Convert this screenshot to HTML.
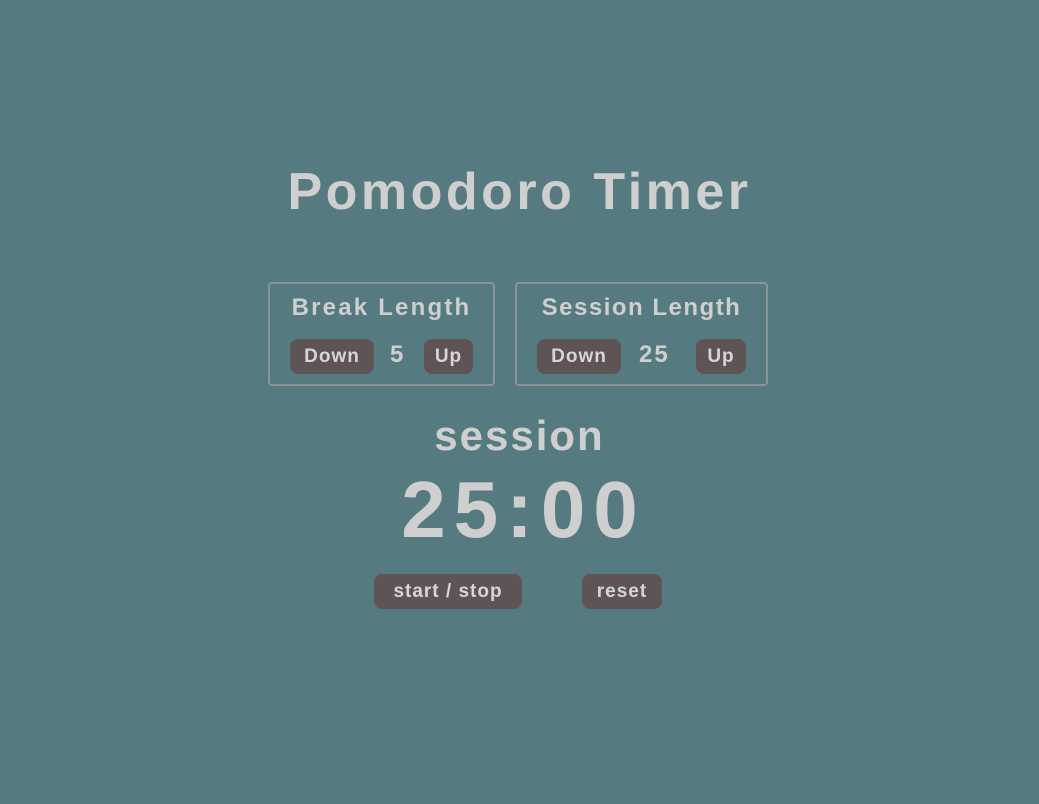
<!DOCTYPE html>
<html><head><style>
body{margin:0;width:1039px;height:804px;background:#557a80;font-family:"Liberation Sans",sans-serif;color:#cfcfcf;position:relative;overflow:hidden}
.a{position:absolute;white-space:nowrap}
.t{left:0;width:1039px;text-align:center}
.box{position:absolute;border:2px solid #8c9496;border-radius:4px;box-sizing:border-box}
.btn{position:absolute;background:#5e5455;border-radius:8px;color:#d6d6d6;font-weight:bold;font-size:19px;text-align:center;box-sizing:border-box;letter-spacing:1px}
</style></head><body>
<div class="a t" style="top:162px;font-size:52px;font-weight:bold;letter-spacing:3.5px">Pomodoro Timer</div>
<div class="box" style="left:268px;top:282px;width:227px;height:104px"></div>
<div class="box" style="left:515px;top:282px;width:253px;height:104px"></div>
<div class="a" style="left:268px;width:227px;text-align:center;top:294px;font-size:24px;font-weight:bold;letter-spacing:2.2px">Break Length</div>
<div class="a" style="left:515px;width:253px;text-align:center;top:294px;font-size:24px;font-weight:bold;letter-spacing:1.5px">Session Length</div>
<div class="btn" style="left:290px;top:339px;width:84px;height:35px;line-height:35px">Down</div>
<div class="a" style="left:390px;top:341px;font-size:24px;font-weight:bold">5</div>
<div class="btn" style="left:424px;top:339px;width:49px;height:35px;line-height:35px">Up</div>
<div class="btn" style="left:537px;top:339px;width:84px;height:35px;line-height:35px">Down</div>
<div class="a" style="left:639px;top:341px;font-size:24px;font-weight:bold;letter-spacing:2px">25</div>
<div class="btn" style="left:696px;top:339px;width:50px;height:35px;line-height:35px">Up</div>
<div class="a t" style="top:412px;font-size:42px;font-weight:bold;letter-spacing:2px">session</div>
<div class="a t" style="top:464px;font-size:80px;font-weight:bold;letter-spacing:8px;text-indent:8px">25:00</div>
<div class="btn" style="left:374px;top:574px;width:148px;height:35px;line-height:35px">start / stop</div>
<div class="btn" style="left:582px;top:574px;width:80px;height:35px;line-height:35px">reset</div>
</body></html>
